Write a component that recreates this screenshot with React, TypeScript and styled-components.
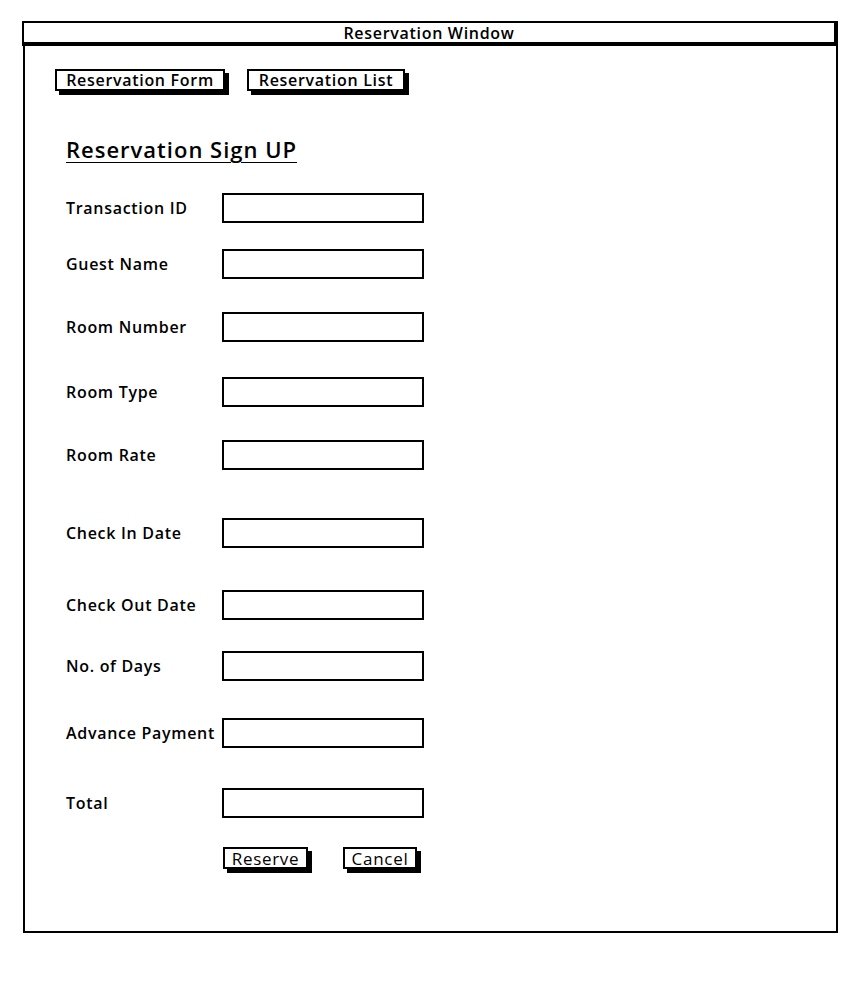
import React from "react";
import styled, { createGlobalStyle } from "styled-components";

const Global = createGlobalStyle`
  html, body { margin: 0; padding: 0; background: #fff; }
  body { font-family: "Open Sans", "DejaVu Sans", sans-serif; color: #000; }
`;

const Page = styled.div`
  padding: 21px 0 0 22px;
  width: 862px;
  height: 982px;
  box-sizing: border-box;
`;

const Window = styled.div`
  width: 816px;
  display: flex;
  flex-direction: column;
`;

const TitleBar = styled.div`
  height: 25px;
  box-sizing: border-box;
  border-top: 2px solid #000;
  border-left: 2px solid #000;
  border-right: 4px solid #000;
  border-bottom: 4px solid #000;
  display: flex;
  align-items: center;
  justify-content: center;
  font-size: 16px;
  font-weight: 600;
  letter-spacing: 0.7px;
  line-height: 1;
`;

const Body = styled.div`
  margin-left: 1px;
  height: 887px;
  box-sizing: border-box;
  border-left: 2px solid #000;
  border-right: 2px solid #000;
  border-bottom: 2px solid #000;
  padding: 23px 0 0 30px;
  display: flex;
  flex-direction: column;
`;

const Tabs = styled.div`
  display: flex;
  gap: 22px;
`;

const SketchButton = styled.button<{ $bold?: boolean; $w: number }>`
  width: ${(p) => p.$w}px;
  height: 22px;
  box-sizing: border-box;
  border: 2px solid #000;
  background: #fff;
  box-shadow: 4px 4px 0 #000;
  font-family: inherit;
  font-size: ${(p) => (p.$bold ? 16 : 17)}px;
  font-weight: ${(p) => (p.$bold ? 600 : 400)};
  letter-spacing: 0.7px;
  line-height: 1;
  color: #000;
  padding: 0;
  display: flex;
  align-items: center;
  justify-content: center;
  cursor: pointer;
`;

const Heading = styled.h1`
  margin: 45px 0 0 11px;
  font-size: 22px;
  font-weight: 600;
  letter-spacing: 1px;
  line-height: 26px;
  text-decoration: underline;
  text-decoration-thickness: 1px;
  text-underline-offset: 4px;
  align-self: flex-start;
`;

const Form = styled.div`
  display: flex;
  flex-direction: column;
  padding-left: 11px;
`;

const Row = styled.div<{ $gap: number }>`
  display: flex;
  align-items: center;
  margin-top: ${(p) => p.$gap}px;
`;

const Label = styled.label`
  width: 156px;
  font-size: 16px;
  font-weight: 600;
  letter-spacing: 0.7px;
  line-height: 1;
  white-space: nowrap;
`;

const Field = styled.input`
  width: 202px;
  height: 30px;
  box-sizing: border-box;
  border: 2px solid #000;
  background: #fff;
  outline: none;
  padding: 0 6px;
  font-family: inherit;
`;

const Actions = styled.div`
  display: flex;
  gap: 35px;
  margin: 29px 0 0 157px;
`;

const fields: { label: string; gap: number }[] = [
  { label: "Transaction ID", gap: 31 },
  { label: "Guest Name", gap: 26 },
  { label: "Room Number", gap: 33 },
  { label: "Room Type", gap: 35 },
  { label: "Room Rate", gap: 33 },
  { label: "Check In Date", gap: 48 },
  { label: "Check Out Date", gap: 42 },
  { label: "No. of Days", gap: 31 },
  { label: "Advance Payment", gap: 37 },
  { label: "Total", gap: 40 },
];

export default function App() {
  return (
    <Page>
      <Global />
      <Window>
        <TitleBar>Reservation Window</TitleBar>
        <Body>
          <Tabs>
            <SketchButton $bold $w={170}>Reservation Form</SketchButton>
            <SketchButton $bold $w={158}>Reservation List</SketchButton>
          </Tabs>
          <Heading>Reservation Sign UP</Heading>
          <Form>
            {fields.map((f) => (
              <Row key={f.label} $gap={f.gap}>
                <Label>{f.label}</Label>
                <Field />
              </Row>
            ))}
            <Actions>
              <SketchButton $w={85}>Reserve</SketchButton>
              <SketchButton $w={74}>Cancel</SketchButton>
            </Actions>
          </Form>
        </Body>
      </Window>
    </Page>
  );
}
